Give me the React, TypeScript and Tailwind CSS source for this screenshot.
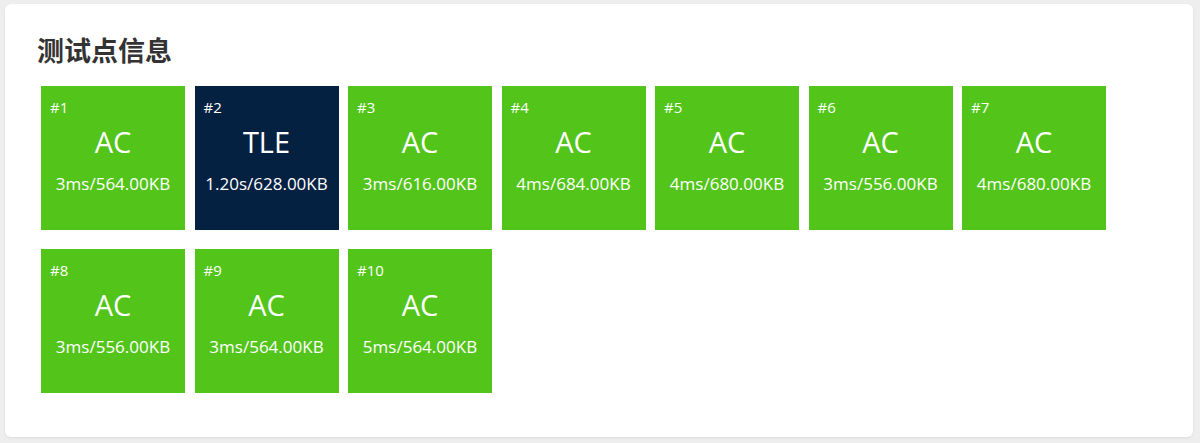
import React from 'react';

type Case = {
  id: number;
  status: 'AC' | 'TLE';
  time: string;
  memory: string;
};

const cases: Case[] = [
  { id: 1, status: 'AC', time: '3ms', memory: '564.00KB' },
  { id: 2, status: 'TLE', time: '1.20s', memory: '628.00KB' },
  { id: 3, status: 'AC', time: '3ms', memory: '616.00KB' },
  { id: 4, status: 'AC', time: '4ms', memory: '684.00KB' },
  { id: 5, status: 'AC', time: '4ms', memory: '680.00KB' },
  { id: 6, status: 'AC', time: '3ms', memory: '556.00KB' },
  { id: 7, status: 'AC', time: '4ms', memory: '680.00KB' },
  { id: 8, status: 'AC', time: '3ms', memory: '556.00KB' },
  { id: 9, status: 'AC', time: '3ms', memory: '564.00KB' },
  { id: 10, status: 'AC', time: '5ms', memory: '564.00KB' },
];

const CaseTile: React.FC<{ item: Case }> = ({ item }) => {
  const bg = item.status === 'AC' ? 'bg-[#52c41a]' : 'bg-[#052142]';

  return (
    <div className={`w-[144px] h-[144px] ${bg} text-white flex flex-col pt-[11px]`}>
      <div className="pl-[9px] text-[15px] leading-[20px]">#{item.id}</div>
      <div className="mt-[7px] text-center text-[29px] leading-[36px]">{item.status}</div>
      <div className="mt-[12px] text-center text-[17px] leading-[24px] whitespace-nowrap">
        {item.time}/{item.memory}
      </div>
    </div>
  );
};

export default function App() {
  return (
    <div className="min-h-[443px] bg-[#eeeeee] pt-[4px] pl-[5px] pr-[7px] pb-[6px] font-['Open_Sans','Noto_Sans_CJK_SC',sans-serif]">
      <div className="bg-white rounded-[6px] shadow-[0_1px_3px_rgba(0,0,0,0.08)] pt-[28px] pb-[44px] px-[32px]">
        {/* Title */}
        <h2 className="text-[27px] leading-[36px] font-bold text-[#333] mb-[18px] font-['Noto_Sans_CJK_SC',sans-serif]">
          测试点信息
        </h2>

        {/* Test cases */}
        <div className="ml-[4px] flex flex-wrap gap-x-[9.5px] gap-y-[19px]">
          {cases.map((c) => (
            <CaseTile key={c.id} item={c} />
          ))}
        </div>
      </div>
    </div>
  );
}
